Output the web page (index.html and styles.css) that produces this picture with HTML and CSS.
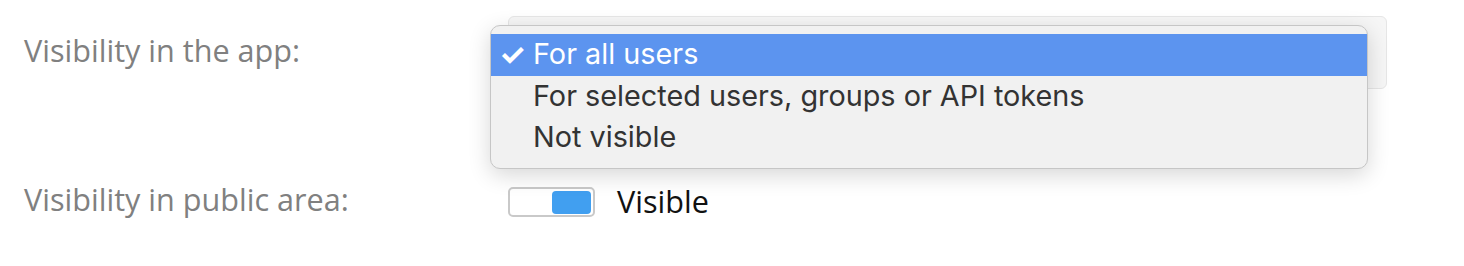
FILE: index.html
```html
<!DOCTYPE html>
<html>
<head>
<meta charset="utf-8">
<link rel="stylesheet" href="styles.css">
</head>
<body>
<div class="form">
  <div class="label">Visibility in the app:</div>
  <div class="select-cell">
    <div class="select"></div>
    <div class="menu">
      <div class="opt active"><span class="check">✓</span>For all users</div>
      <div class="opt">For selected users, groups or API tokens</div>
      <div class="opt">Not visible</div>
    </div>
  </div>
  <div class="label">Visibility in public area:</div>
  <div class="toggle-cell">
    <div class="toggle"><div class="knob"></div></div>
    <span class="toggle-text">Visible</span>
  </div>
</div>
</body>
</html>
```
FILE: styles.css
```css
html, body { margin: 0; background: #fff; }
body { width: 1464px; height: 266px; overflow: hidden; }
.form {
  display: grid;
  grid-template-columns: 484px 879px;
  row-gap: 98px;
  padding: 16px 0 0 24px;
  align-items: center;
}
.label {
  font-family: "Open Sans", sans-serif;
  font-size: 30.6px;
  color: #808080;
  line-height: 30px;
  margin-top: -6px;
}
.select-cell { position: relative; height: 73px; }
.select {
  box-sizing: border-box;
  height: 73px;
  border: 1px solid #e6e6e6;
  border-radius: 6px;
  background: #f6f6f6;
}
.menu {
  position: absolute;
  left: -18px;
  top: 9px;
  width: 878px;
  box-sizing: border-box;
  padding: 8px 0 9px;
  background: #f1f1f1;
  border: 1px solid #c6c6c6;
  border-radius: 10px;
  box-shadow: 0 6px 22px rgba(0,0,0,0.16);
  font-family: Inter, "Liberation Sans", sans-serif;
  font-size: 28.8px;
  color: #333;
}
.opt {
  height: 41.5px;
  line-height: 40px;
  padding-left: 42px;
  position: relative;
}
.opt.active { background: #5c94ef; color: #fff; }
.check {
  position: absolute;
  left: 8px;
  top: 0;
  font-size: 30px;
  font-weight: 700;
}
.toggle-cell { display: flex; align-items: center; gap: 22px; height: 30px; }
.toggle {
  box-sizing: border-box;
  width: 87px;
  height: 30px;
  border: 2px solid #c9c9c9;
  border-radius: 5px;
  background: #fff;
  display: flex;
  justify-content: flex-end;
  align-items: center;
  padding-right: 2px;
}
.knob {
  width: 39px;
  height: 23px;
  border-radius: 4px;
  background: #419ff0;
}
.toggle-text {
  font-family: "Open Sans", sans-serif;
  font-size: 30.6px;
  line-height: 30px;
  color: #111;
  margin-top: -3px;
}
```
